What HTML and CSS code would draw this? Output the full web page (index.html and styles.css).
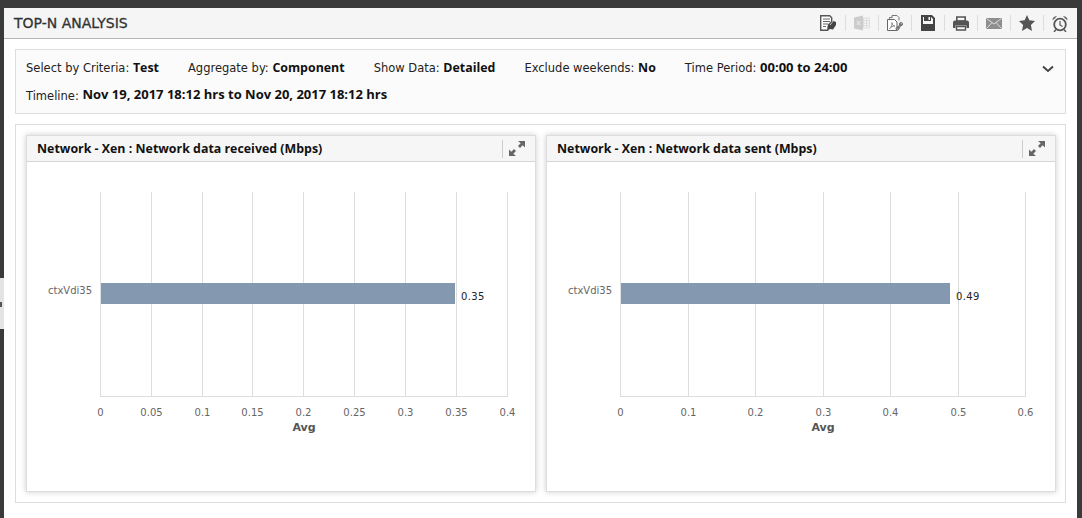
FILE: index.html
```html
<!DOCTYPE html>
<html lang="en">
<head>
    <meta charset="UTF-8">
    <title>Top-N Analysis</title>
    <link rel="stylesheet" href="styles.css">
</head>
<body>
    <div class="side-tab"></div>
    <div class="panel">
        <div class="panel-head">
            <h1>TOP-N ANALYSIS</h1>
            <div class="tools">
                <span class="tool">
                    <svg width="16" height="16" viewBox="0 0 16 16"><path d="M.7.7h9l2 2v4l-3 3-1 5.600H.7z" fill="#fff" stroke="#555" stroke-width="1.400"/><path d="M3 4h7M3 6.500h7M3 9h5M3 11.500h3" stroke="#666"/><path d="M7.500 12l1.500-3 1.500 1 3-4 2.500 1v3l-3 4.500-3-.5-1.500 1z" fill="#444"/></svg>
                </span>
                <span class="tool">
                    <svg width="16" height="16" viewBox="0 0 16 16"><path d="M0 2.500L9 .5v15l-9-2z" fill="#ccc"/><path d="M9.500 3h6v10h-6z" fill="none" stroke="#ddd"/><path d="M9.500 5.500h6M9.500 8h6M9.500 10.500h6M12.500 3v10" stroke="#ddd"/><path d="M3 6l3 4M6 6l-3 4" stroke="#eee"/></svg>
                </span>
                <span class="tool">
                    <svg width="16" height="16" viewBox="0 0 16 16"><path d="M5 3V.5h5l2 2v3M2.500 5V2.500H5" fill="none" stroke="#777"/><path d="M.5 4.500h7l2.500 2.500v8.500H.5z" fill="#fff" stroke="#666"/><path d="M2.500 13.500c2-1 2.500-3.500 2.500-6 0 2.500 1.500 3.500 3 3.500-2.500 0-4 1-5.500 2.500z" fill="none" stroke="#777" stroke-width=".8"/><path d="M9.500 13l4-5 2 1.500-4 5z" fill="#888"/><circle cx="10.500" cy="13.500" r="1.500" fill="none" stroke="#666"/><circle cx="14" cy="9" r="1.500" fill="none" stroke="#666"/></svg>
                </span>
                <span class="tool">
                    <svg width="14" height="16" viewBox="0 0 14 16"><path d="M1 1h9.500L13 3.500V15H1z" fill="none" stroke="#444" stroke-width="2"/><path d="M3 1h7v5H3z" fill="#444"/><path d="M7.500 2H9v3H7.500z" fill="#fff"/><path d="M2 9h10v6H2z" fill="#444"/></svg>
                </span>
                <span class="tool">
                    <svg width="16" height="15" viewBox="0 0 16 15"><path d="M3.800 1h8.400v4H3.800z" fill="none" stroke="#555" stroke-width="1.600"/><path d="M2 4.500h12a2 2 0 0 1 2 2V12h-2.500V9.500h-11V12H0V6.500a2 2 0 0 1 2-2z" fill="#555"/><path d="M3.500 10.500h9V14h-9z" fill="none" stroke="#555" stroke-width="1.400"/></svg>
                </span>
                <span class="tool">
                    <svg width="16" height="11" viewBox="0 0 16 11"><path d="M0 0h16v11H0z" fill="#8e8e8e"/><path d="M.5.500l7.500 5.500 7.500-5.500M.5 10.500l5.500-6M15.500 10.500l-5.500-6" fill="none" stroke="#ddd"/></svg>
                </span>
                <span class="tool">
                    <svg width="16" height="16" viewBox="0 0 16 16"><path d="M8 0l2.400 5.300 5.600.7-4.100 4 1.100 6-5-3-5 3 1.100-6L0 6l5.600-.7z" fill="#555"/></svg>
                </span>
                <span class="tool">
                    <svg width="16" height="17" viewBox="0 0 16 17"><circle cx="8" cy="9.500" r="5.800" fill="none" stroke="#555" stroke-width="1.800"/><path d="M8 6v4l2.500 1.500" fill="none" stroke="#555" stroke-width="1.200"/><path d="M.5 5.500A4 4 0 0 1 5 1.200zM15.500 5.500A4 4 0 0 0 11 1.200z" fill="#555"/><path d="M4 14.500L2 17M12 14.500l2 2.500" stroke="#555" stroke-width="1.400"/></svg>
                </span>
            </div>
        </div>

        <div class="panel-body">
            <div class="criteria">
                <div class="criteria-row">
                    <span class="item">Select by Criteria: <b>Test</b></span>
                    <span class="item">Aggregate by: <b>Component</b></span>
                    <span class="item">Show Data: <b>Detailed</b></span>
                    <span class="item">Exclude weekends: <b>No</b></span>
                    <span class="item">Time Period: <b class="num">00:00 to 24:00</b></span>
                </div>
                <div class="criteria-row timeline">Timeline: <b class="num">Nov 19, 2017 18:12 hrs to Nov 20, 2017 18:12 hrs</b></div>
                <svg class="chevron" width="12" height="8" viewBox="0 0 12 8"><path d="M1 1.500l5 4.500 5-4.500" fill="none" stroke="#444" stroke-width="2"/></svg>
            </div>

            <div class="charts">
                <div class="card">
                    <div class="card-head">
                        <h2>Network - Xen : Network data received (Mbps)</h2>
                        <span class="expand">
                            <svg width="16" height="15" viewBox="0 0 16 15"><path d="M9 0h7v6.500l-2.300-2.200L11 7 9 5l2.700-2.800zM7 15H0V8.500l2.300 2.200L5 8l2 2-2.700 2.800z" fill="#666"/></svg>
                        </span>
                    </div>
                    <svg class="plot" width="508" height="328" viewBox="0 0 508 328">
                        <g class="grid">
                            <path d="M73.500 30v204.500M124.500 30v204.500M175.500 30v204.500M225.500 30v204.500M276.500 30v204.500M327.500 30v204.500M378.500 30v204.500M429.500 30v204.500M480.500 30v204.500M73 234.500h408"/>
                        </g>
                        <rect class="bar" x="74" y="121" width="354" height="21"/>
                        <text class="cat" x="65" y="132">ctxVdi35</text>
                        <text class="val" x="434" y="138">0.35</text>
                        <g class="ticks">
                            <text x="73.500" y="254">0</text>
                            <text x="124.500" y="254">0.05</text>
                            <text x="175.500" y="254">0.1</text>
                            <text x="225.500" y="254">0.15</text>
                            <text x="276.500" y="254">0.2</text>
                            <text x="327.500" y="254">0.25</text>
                            <text x="378.500" y="254">0.3</text>
                            <text x="429.500" y="254">0.35</text>
                            <text x="480.500" y="254">0.4</text>
                        </g>
                        <text class="axis-name" x="277" y="269">Avg</text>
                    </svg>
                </div>
                <div class="card">
                    <div class="card-head">
                        <h2>Network - Xen : Network data sent (Mbps)</h2>
                        <span class="expand">
                            <svg width="16" height="15" viewBox="0 0 16 15"><path d="M9 0h7v6.500l-2.300-2.200L11 7 9 5l2.700-2.800zM7 15H0V8.500l2.300 2.200L5 8l2 2-2.700 2.800z" fill="#666"/></svg>
                        </span>
                    </div>
                    <svg class="plot" width="508" height="328" viewBox="0 0 508 328">
                        <g class="grid">
                            <path d="M73.500 30v204.500M141.500 30v204.500M208.500 30v204.500M276.500 30v204.500M343.500 30v204.500M411.500 30v204.500M478.500 30v204.500M73 234.500h406"/>
                        </g>
                        <rect class="bar" x="74" y="121" width="329" height="21"/>
                        <text class="cat" x="65" y="132">ctxVdi35</text>
                        <text class="val" x="409" y="138">0.49</text>
                        <g class="ticks">
                            <text x="73.500" y="254">0</text>
                            <text x="141.500" y="254">0.1</text>
                            <text x="208.500" y="254">0.2</text>
                            <text x="276.500" y="254">0.3</text>
                            <text x="343.500" y="254">0.4</text>
                            <text x="411.500" y="254">0.5</text>
                            <text x="478.500" y="254">0.6</text>
                        </g>
                        <text class="axis-name" x="276" y="269">Avg</text>
                    </svg>
                </div>
            </div>
        </div>
    </div>
</body>
</html>
```

FILE: styles.css
```css
html, body {
    height: 100%;
}
body {
    margin: 0;
    padding: 8px 5px 0 4px;
    box-sizing: border-box;
    background-color: #3a3a3a;
    font-family: "DejaVu Sans", sans-serif;
    font-size: 11.5px;
    color: #222;
    overflow: hidden;
}
b {
    font-family: "Open Sans", sans-serif;
    font-size: 12.4px;
    line-height: 1;
    font-weight: bold;
    color: #111;
}
b.num {
    font-size: 13px;
}
.side-tab {
    position: absolute;
    left: 0;
    top: 278px;
    width: 4px;
    height: 51px;
    background: #e4e4e4;
}
.side-tab::after {
    content: "";
    position: absolute;
    left: 0;
    top: 24px;
    width: 2px;
    height: 5px;
    background: #555;
}
.panel {
    height: 510px;
    background: white;
}
.panel-head {
    display: flex;
    align-items: center;
    justify-content: space-between;
    height: 30px;
    padding-left: 10px;
    background: #f5f5f5;
    border-bottom: 1px solid #b5b5b5;
}
h1 {
    margin: 0;
    font-size: 14px;
    font-weight: normal;
    color: #333;
    -webkit-text-stroke: 0.3px #333;
}
.tools {
    display: flex;
    align-items: center;
    padding-right: 1px;
}
.tool {
    display: flex;
    align-items: center;
    justify-content: center;
    width: 32px;
    height: 16px;
    border-left: 1px solid #ddd;
}
.tool:first-child {
    border-left: none;
    margin-right: 1px;
}
.panel-body {
    padding: 10px 11px 0;
}
.criteria {
    position: relative;
    height: 65px;
    box-sizing: border-box;
    padding: 10px 10px 0;
    background: #fbfbfb;
    border: 1px solid #ddd;
}
.criteria-row {
    display: flex;
    white-space: pre;
    height: 16px;
    line-height: 16px;
}
.timeline {
    margin-top: 12px;
}
.item {
    margin-right: 29px;
}
.chevron {
    position: absolute;
    right: 11px;
    top: 15px;
}
.charts {
    display: flex;
    gap: 10px;
    height: 379px;
    box-sizing: border-box;
    margin-top: 10px;
    padding: 10px;
    border: 1px solid #ddd;
}
.card {
    flex: 1;
    background: white;
    border: 1px solid #ddd;
    box-shadow: 0 0 6px rgba(0,0,0,0.2);
}
.card-head {
    display: flex;
    align-items: center;
    justify-content: space-between;
    height: 25px;
    padding-left: 10px;
    background: #f6f6f6;
    border-bottom: 1px solid #d5d5d5;
}
h2 {
    margin: 0;
    font-family: "Open Sans", sans-serif;
    font-size: 12.4px;
    font-weight: bold;
    color: #111;
}
.expand {
    display: flex;
    align-items: center;
    justify-content: center;
    width: 27px;
    height: 18px;
    margin-right: 5px;
    border-left: 1px solid #ccc;
}
.plot {
    display: block;
}
.grid path {
    fill: none;
    stroke: #ddd;
    stroke-width: 1;
}
.bar {
    fill: #8499b0;
}
.plot text {
    font-family: "DejaVu Sans", sans-serif;
    font-size: 10px;
    fill: #666;
}
.plot .cat {
    text-anchor: end;
}
.plot .val {
    fill: #222;
    letter-spacing: 0.4px;
}
.ticks text {
    text-anchor: middle;
}
.plot .axis-name {
    text-anchor: middle;
    font-size: 11px;
    font-weight: bold;
    fill: #555;
}
```
